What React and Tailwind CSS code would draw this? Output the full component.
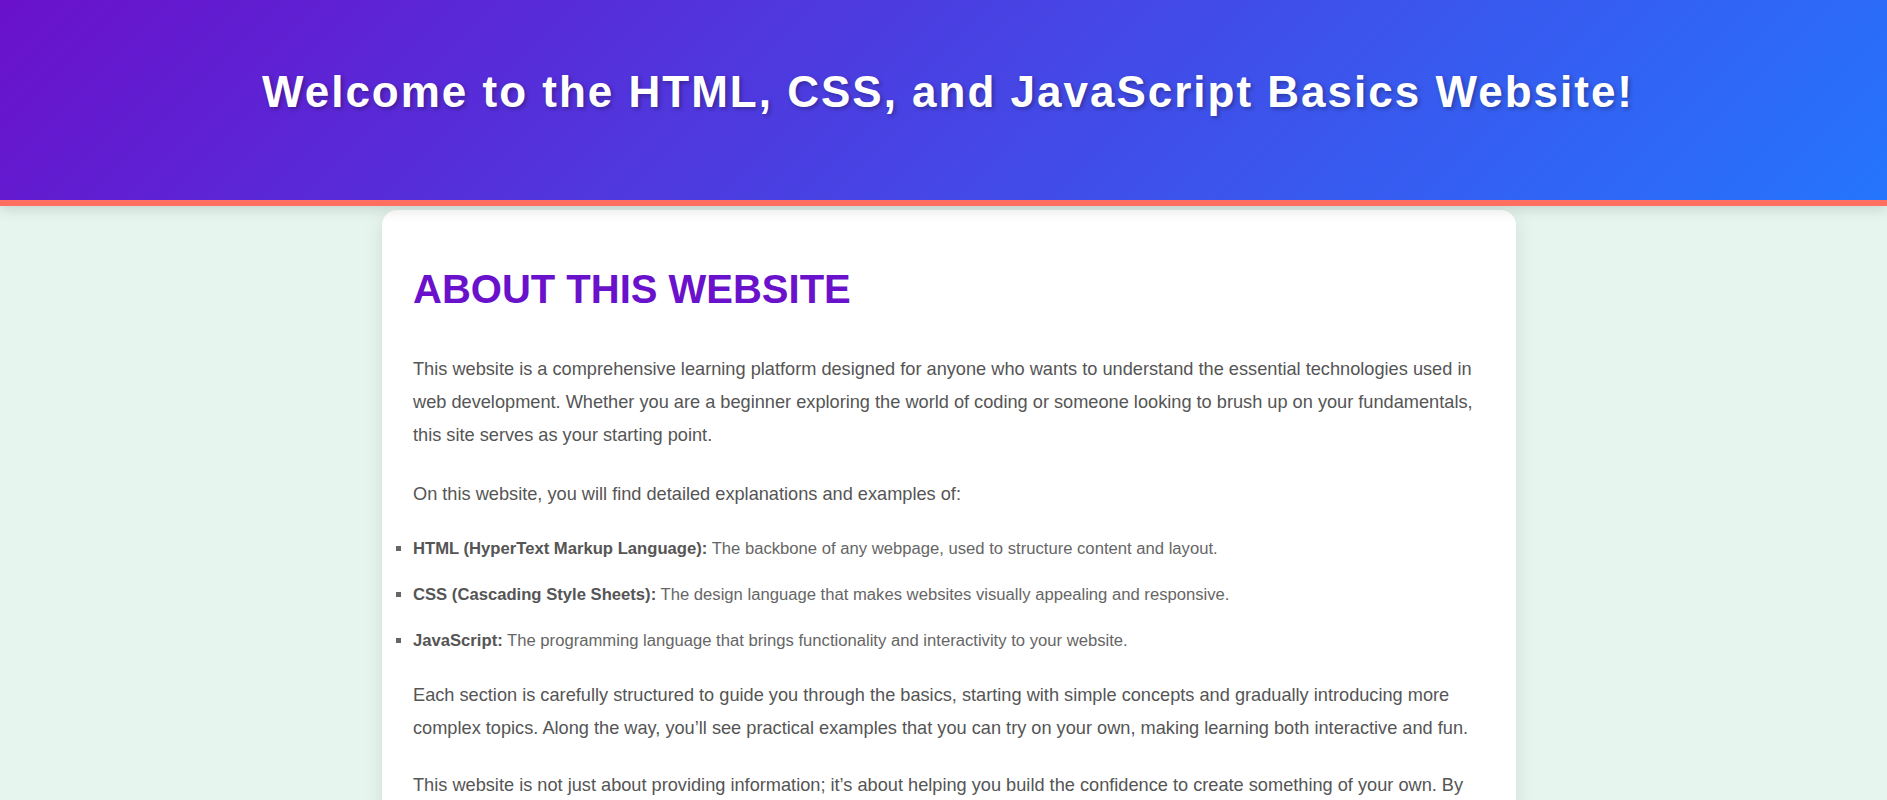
export default function App() {
  const font = { fontFamily: '"Liberation Sans", Arial, sans-serif' };
  return (
    <div className="min-h-[800px] bg-[#e6f5ee]" style={font}>
      <header className="relative z-10 h-[206px] border-b-[6px] border-[#ff6f61] bg-[linear-gradient(135deg,#6a11cb,#2575fc)] shadow-[0_4px_12px_rgba(0,0,0,0.12)]">
        <h1 className="pt-[66px] pl-[9px] text-center text-[44px] leading-[51px] font-bold tracking-[2px] text-white [text-shadow:2px_2px_4px_rgba(0,0,0,0.3)]">
          Welcome to the HTML, CSS, and JavaScript Basics Website!
        </h1>
      </header>
      <main className="pt-[4px] pb-10">
        <section className="ml-[382px] w-[1134px] rounded-[15px] bg-white pt-[56px] pr-[30px] pb-[30px] pl-[31px] shadow-[0_4px_20px_rgba(0,0,0,0.1)]">
          <h2 className="text-[40px] leading-[46px] font-bold uppercase text-[#6a11cb]">
            About this website
          </h2>
          <p className="mt-[41px] text-[18.2px] leading-[33px] text-[#555]">
            This website is a comprehensive learning platform designed for anyone who wants to understand the essential technologies used in web development. Whether you are a beginner exploring the world of coding or someone looking to brush up on your fundamentals, this site serves as your starting point.
          </p>
          <p className="mt-[26px] text-[18.2px] leading-[33px] text-[#555]">
            On this website, you will find detailed explanations and examples of:
          </p>
          <ul className="mt-[24px] list-[square] pl-0 text-[16.65px] leading-[28.8px] text-[#666] marker:text-[#666]">
            <li className="mb-[17px]">
              <strong className="font-bold text-[#555]">HTML (HyperText Markup Language):</strong> The backbone of any webpage, used to structure content and layout.
            </li>
            <li className="mb-[17px]">
              <strong className="font-bold text-[#555]">CSS (Cascading Style Sheets):</strong> The design language that makes websites visually appealing and responsive.
            </li>
            <li>
              <strong className="font-bold text-[#555]">JavaScript:</strong> The programming language that brings functionality and interactivity to your website.
            </li>
          </ul>
          <p className="mt-[23.5px] text-[18.2px] leading-[33px] text-[#555]">
            Each section is carefully structured to guide you through the basics, starting with simple concepts and gradually introducing more complex topics. Along the way, you’ll see practical examples that you can try on your own, making learning both interactive and fun.
          </p>
          <p className="mt-[24.4px] text-[18.2px] leading-[33px] text-[#555]">
            This website is not just about providing information; it’s about helping you build the confidence to create something of your own. By learning HTML, CSS, and JavaScript, you will gain the skills needed to design and develop your own websites from scratch.
          </p>
        </section>
      </main>
    </div>
  );
}
